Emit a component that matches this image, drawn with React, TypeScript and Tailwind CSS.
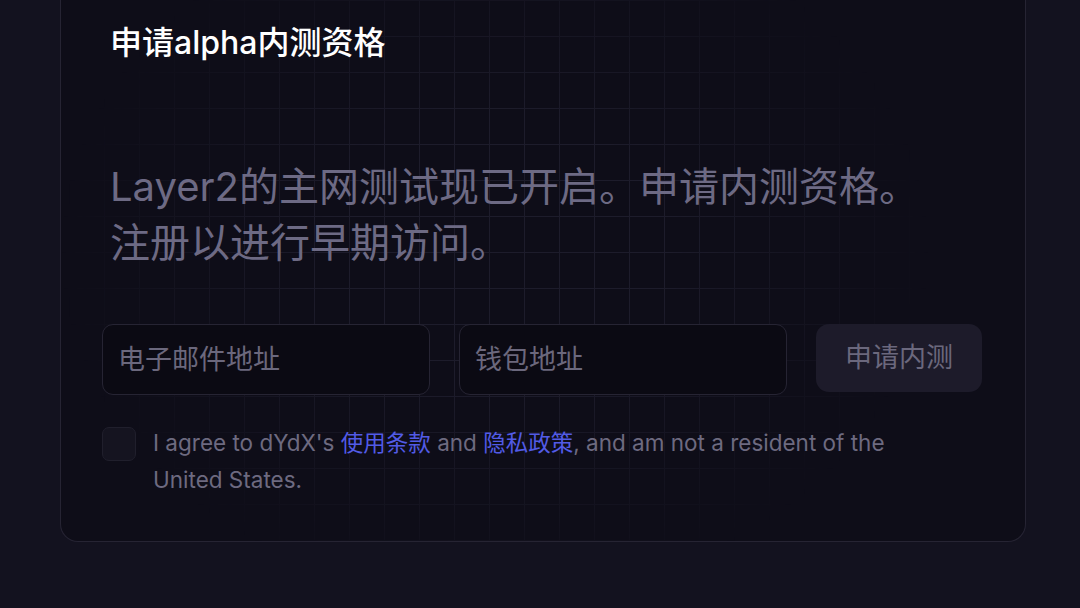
function App() {
  return (
    <div className="h-[608px] w-[1080px] overflow-hidden bg-[#13121f] font-['Inter','Noto_Sans_CJK_SC',sans-serif]">
      <div className="relative ml-[60px] mr-[54px] mt-[-40px] overflow-hidden rounded-b-[18px] border border-t-0 border-[#262433] bg-[#0e0d18] px-[41px] pb-[43px] pt-[62px]">
        <div className="pointer-events-none absolute inset-0 bg-[linear-gradient(to_right,#1d1c2b_1px,transparent_1px),linear-gradient(to_bottom,#1d1c2b_1px,transparent_1px)] bg-[size:35px_36px] bg-[position:8px_4px] [mask-image:radial-gradient(ellipse_45%_60%_at_45%_50%,black_40%,transparent_100%)]" />
        <div className="relative">
          <h1 className="pl-2 text-[32px] leading-[42px] font-medium text-white">
            申请alpha内测资格
          </h1>
          <p className="mt-[95px] pl-2 text-[40px] leading-[56px] font-normal text-[#6d6a84]">
            Layer2的主网测试现已开启。申请内测资格。
            <br />
            注册以进行早期访问。
          </p>
          <div className="mt-[53px] flex gap-[29px]">
            <input
              className="h-[71px] w-[328px] rounded-[11px] border border-[#262433] bg-[#0b0a13] px-[15px] text-[27px] text-white outline-none placeholder:text-[#6b687d]"
              placeholder="电子邮件地址"
            />
            <input
              className="h-[71px] w-[328px] rounded-[11px] border border-[#262433] bg-[#0b0a13] px-[15px] text-[27px] text-white outline-none placeholder:text-[#6b687d]"
              placeholder="钱包地址"
            />
            <button
              type="button"
              className="h-[68px] w-[166px] shrink-0 rounded-[13px] bg-[#1d1b2a] text-[27px] text-[#6b687d]"
            >
              申请内测
            </button>
          </div>
          <div className="mt-[29px] flex gap-[17px]">
            <div className="mt-[3px] h-[34px] w-[34px] shrink-0 rounded-[7px] border border-[#201f2c] bg-[#151420]" />
            <p className="w-[760px] text-[22.5px] leading-[37px] text-[#6d6a80]">
              I agree to dYdX's{" "}
              <a className="text-[#525be6]">使用条款</a> and{" "}
              <a className="text-[#525be6]">隐私政策</a>, and am not a resident
              of the United States.
            </p>
          </div>
        </div>
      </div>
    </div>
  );
}

export default App;
